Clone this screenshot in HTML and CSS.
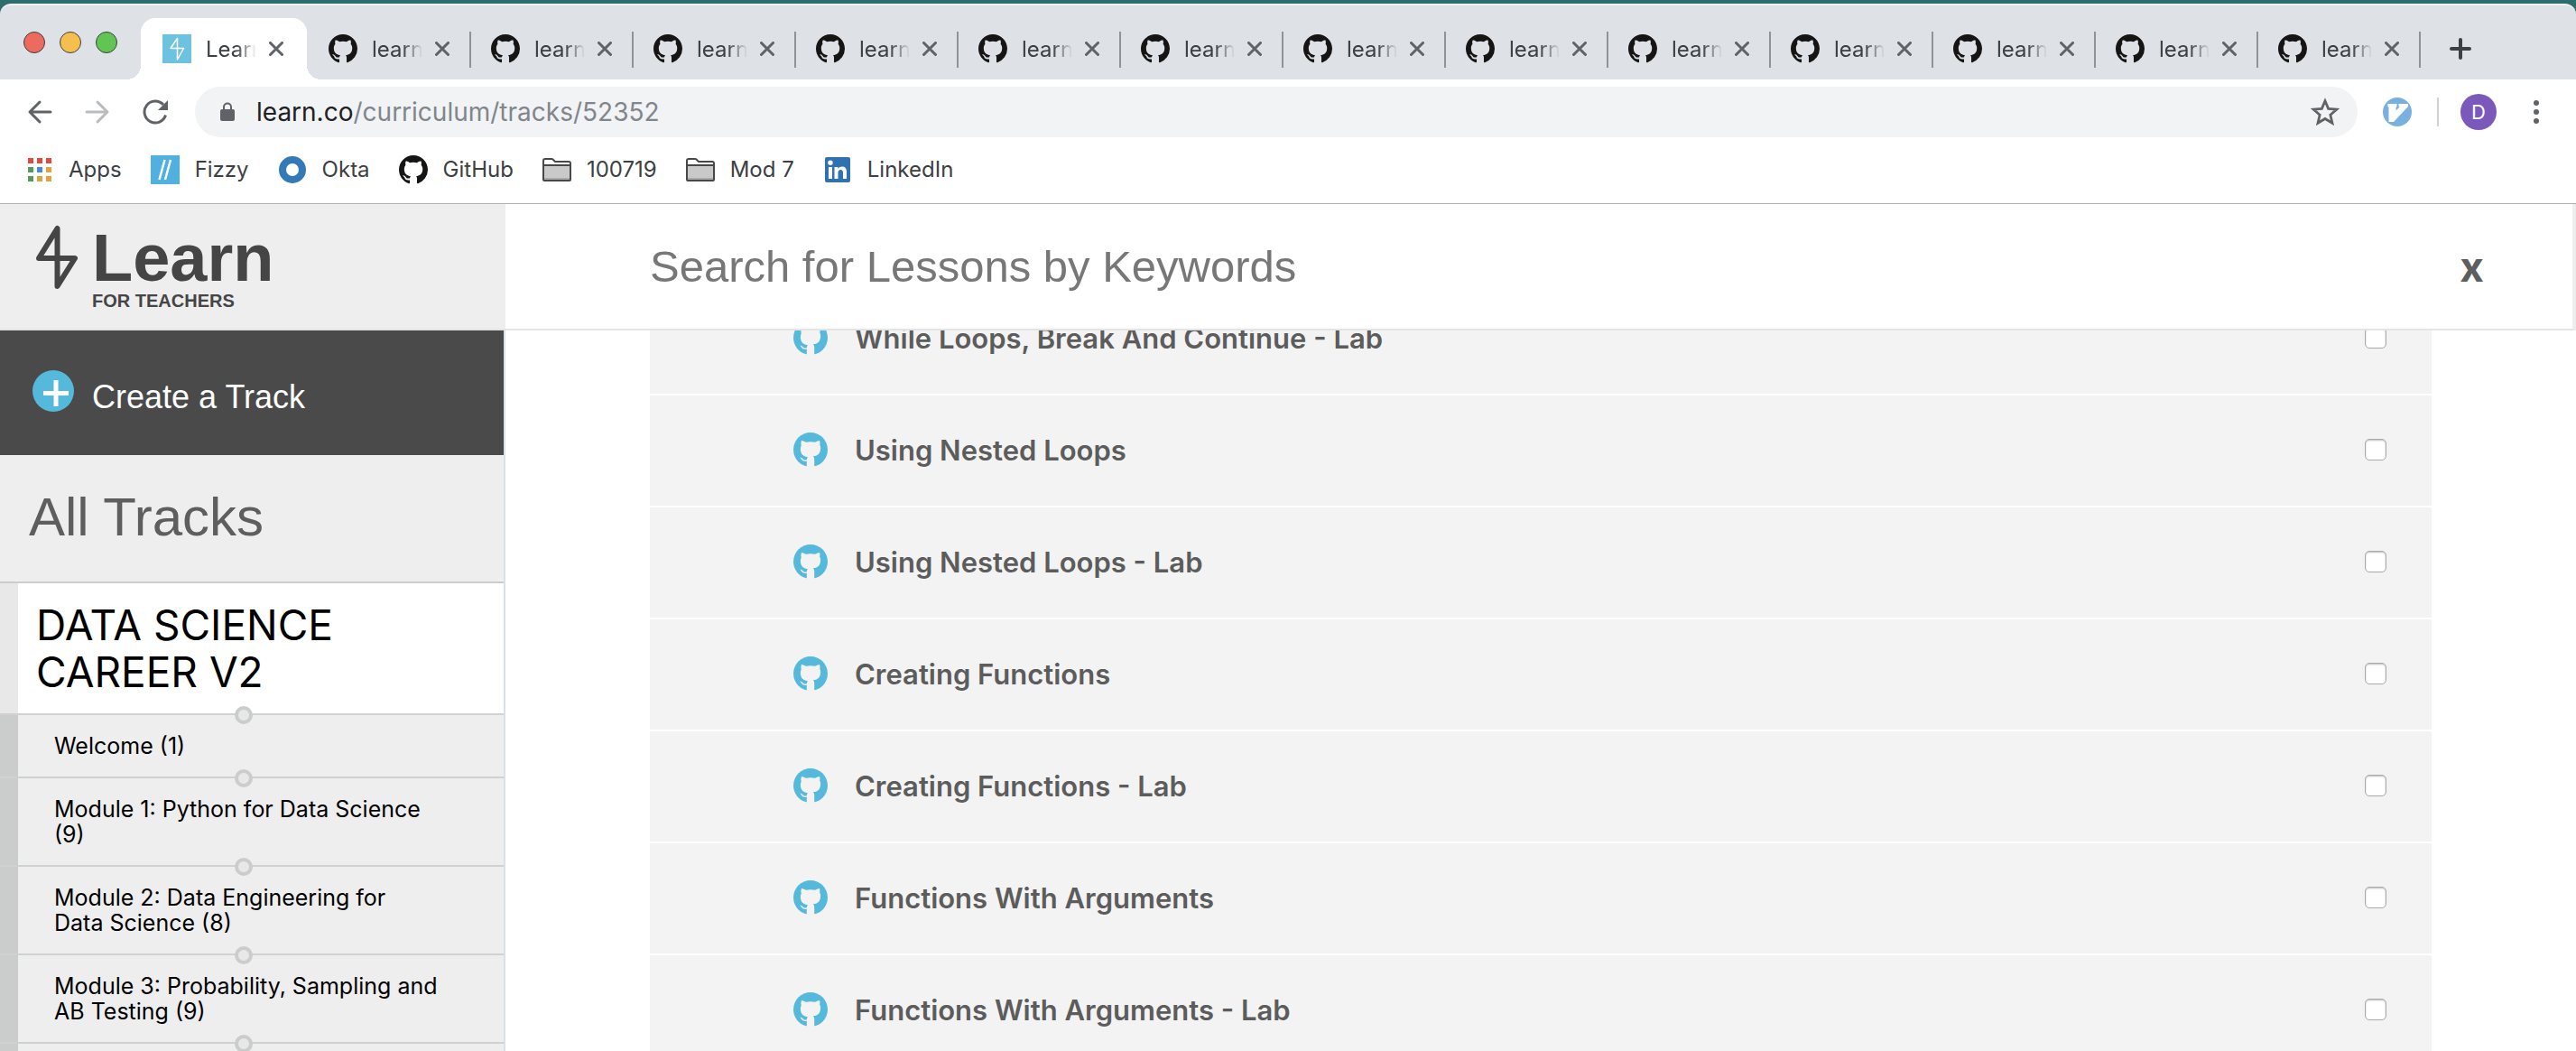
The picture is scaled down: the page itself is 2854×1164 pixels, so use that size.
FILE: index.html
```html
<!DOCTYPE html>
<html lang="en">
<head>
<meta charset="utf-8">
<title>Learn for Teachers</title>
<link rel="stylesheet" href="styles.css">
<script src="app.js" defer></script>
</head>
<body>
<svg class="sprite" aria-hidden="true">
  <symbol id="github" viewBox="0 0 16 16"><path fill="currentColor" d="M8 0C3.58 0 0 3.58 0 8c0 3.54 2.29 6.53 5.47 7.59.4.07.55-.17.55-.38 0-.19-.01-.82-.01-1.49-2.01.37-2.53-.49-2.69-.94-.09-.23-.48-.94-.82-1.13-.28-.15-.68-.52-.01-.53.63-.01 1.08.58 1.23.82.72 1.21 1.87.87 2.33.66.07-.52.28-.87.51-1.07-1.78-.2-3.64-.89-3.64-3.95 0-.87.31-1.59.82-2.15-.08-.2-.36-1.02.08-2.12 0 0 .67-.21 2.2.82.64-.18 1.32-.27 2-.27s1.36.09 2 .27c1.53-1.04 2.2-.82 2.2-.82.44 1.1.16 1.92.08 2.12.51.56.82 1.27.82 2.15 0 3.07-1.87 3.75-3.65 3.95.29.25.54.73.54 1.48 0 1.07-.01 1.93-.01 2.2 0 .21.15.46.55.38A8.01 8.01 0 0 0 16 8c0-4.42-3.58-8-8-8z"/></symbol>
  <symbol id="octo" viewBox="0 0 38 38"><circle cx="19" cy="19" r="19" fill="#55b9db"/><path fill="#f3f3f3" d="M9 9q.5-.6 5 1.800 5-1 10 0Q28.500 8.400 29 9q1 2.500.2 4.600Q30.500 15.500 30 19q-.8 7-8 7.300 1.200 1.300 1.200 3.200V38h-8.400v-6.200q-4.500.9-6-2.300-.5-1-1.600-1.700 2.300-.4 3.500 1.700 1.300 1.500 4.100.7.200-2.200 1.200-2.900-7.200-.6-8-7.300-.5-3.500.8-5.400Q8 11.500 9 9z"/></symbol>
  <symbol id="close" viewBox="0 0 16 16"><path d="M1.500 1.500l13 13M14.500 1.500l-13 13" stroke="#5f6368" stroke-width="3" stroke-linecap="round"/></symbol>
  <symbol id="folder" viewBox="0 0 32 26"><path d="M1 24V3q0-2 2-2h7q1 0 2 1l2 2h15q2 0 2 2v18q0 1-1 1H2q-1 0-1-1z" fill="#fff" stroke="#484848" stroke-width="2"/><path d="M2 9h28v15H2z" fill="#c9c9c9"/><path d="M2 8h28" stroke="#484848" stroke-width="2"/><path d="M2 23h28" stroke="#aaa" stroke-width="2"/></symbol>
</svg>

<header class="browser">
  <div class="tabstrip">
    <div class="lights"><i class="red"></i><i class="yellow"></i><i class="green"></i></div>
    <div class="tab active">
      <svg class="fav" viewBox="0 0 32 32"><path fill="#6dc3df" d="M0 0h32v32H0z"/><path d="M16.500 4.500v23.500l7-12.500H9z" fill="none" stroke="#fff" stroke-width="1.500" stroke-linejoin="round"/></svg>
      <span class="tab-name">Learn</span>
      <button class="close" aria-label="Close tab"><svg><use href="#close"/></svg></button>
    </div>
    <div class="tabs" id="tabs"></div>
    <button class="new-tab" aria-label="New tab"><svg viewBox="0 0 24 24"><path d="M12 2v20M2 12h20" stroke="#3c4043" stroke-width="4" stroke-linecap="round"/></svg></button>
  </div>

  <div class="toolbar">
    <div class="nav">
      <button aria-label="Back"><svg viewBox="0 0 28 28"><path d="M26 14H3M14 3L3 14l11 11" fill="none" stroke="#5f6368" stroke-width="3" stroke-linecap="round" stroke-linejoin="round"/></svg></button>
      <button aria-label="Forward"><svg viewBox="0 0 28 28"><path d="M2 14h23M14 3l11 11-11 11" fill="none" stroke="#babcbe" stroke-width="3" stroke-linecap="round" stroke-linejoin="round"/></svg></button>
      <button aria-label="Reload"><svg viewBox="0 0 28 28"><path d="M25.500 17.500A12 12 0 1 1 23 6" fill="none" stroke="#5f6368" stroke-width="3"/><path d="M28 1v11H17z" fill="#5f6368"/></svg></button>
    </div>
    <div class="omnibox">
      <svg class="lock" viewBox="0 0 18 22"><rect x="1" y="8" width="16" height="13" rx="2" fill="#5f6368"/><path d="M5 9V5.500a4 4 0 0 1 8 0V9" fill="none" stroke="#5f6368" stroke-width="2"/></svg>
      <span class="url"><b>learn.co</b>/curriculum/tracks/52352</span>
      <svg class="star" viewBox="0 0 30 30"><path d="M15 3.500l3.400 8.100 8.700.7-6.600 5.700 2 8.500-7.500-4.500-7.500 4.500 2-8.500-6.600-5.700 8.700-.7z" fill="none" stroke="#5f6368" stroke-width="2.600"/></svg>
    </div>
    <svg class="vim" viewBox="0 0 32 32"><circle cx="16" cy="16" r="16" fill="#78b1df"/><path d="M5.500 7h10v3l-1 1v3.500l4-4-1-1V7h10.500v3L12 27H6.500V11l-1-1z" fill="#fff"/></svg>
    <span class="bar"></span>
    <button class="avatar">D</button>
    <button class="more" aria-label="Menu"><svg viewBox="0 0 8 28"><circle cx="4" cy="4" r="3" fill="#5f6368"/><circle cx="4" cy="14" r="3" fill="#5f6368"/><circle cx="4" cy="24" r="3" fill="#5f6368"/></svg></button>
  </div>

  <nav class="bookmarks">
    <a href="#"><svg class="apps" viewBox="0 0 26 26"><path fill="#e3493b" d="M0 0h6v6H0zM10 0h6v6h-6zM20 0h6v6h-6z"/><path fill="#549a5c" d="M0 10h6v6H0zM0 20h6v6H0z"/><path fill="#4685f3" d="M10 10h6v6h-6z"/><path fill="#e2a33c" d="M20 10h6v6h-6zM10 20h6v6h-6zM20 20h6v6h-6z"/></svg>Apps</a>
    <a href="#"><svg viewBox="0 0 32 32"><path fill="#50b0e0" d="M0 0h32v32H0z"/><path d="M15.500 5L9.500 27M22 5l-6 22" stroke="#fff" stroke-width="2.500"/></svg>Fizzy</a>
    <a href="#"><svg viewBox="0 0 32 32"><circle cx="16" cy="16" r="11" fill="none" stroke="#337ab7" stroke-width="8"/></svg>Okta</a>
    <a href="#"><svg class="gh"><use href="#github"/></svg>GitHub</a>
    <a href="#"><svg class="folder"><use href="#folder"/></svg>100719</a>
    <a href="#"><svg class="folder"><use href="#folder"/></svg>Mod 7</a>
    <a href="#"><svg viewBox="0 0 32 32"><rect x="2" y="2" width="28" height="28" rx="2" fill="#2f72af"/><path fill="#fff" d="M6 13h4v13H6zM12.500 13h4v2q1.300-2.400 4.500-2.400 5 0 5 5.900V26h-4v-6.500q0-3.500-2.600-3.500-2.900 0-2.900 3.500V26h-4z"/><circle cx="8" cy="8.200" r="2.700" fill="#fff"/></svg>LinkedIn</a>
  </nav>
</header>

<div class="page">
  <aside class="sidebar">
    <a class="logo" href="#">
      <svg viewBox="0 0 46 74"><path d="M23.500 5v64L43 38H3z" fill="none" stroke="#454545" stroke-width="6" stroke-linejoin="round"/></svg>
      <span class="brand"><span class="name">Learn</span><span class="sub">FOR TEACHERS</span></span>
    </a>
    <button class="create"><svg viewBox="0 0 46 46"><circle cx="23" cy="23" r="23" fill="#55b9db"/><path d="M12 25.500h28M26 11v29" stroke="#fff" stroke-width="5"/></svg><span>Create a Track</span></button>
    <h1>All Tracks</h1>
    <section class="track">
      <h2>DATA SCIENCE<br>CAREER V2</h2>
      <ul>
        <li><a href="#">Welcome (1)</a></li>
        <li><a href="#">Module 1: Python for Data&nbsp;Science (9)</a></li>
        <li><a href="#">Module 2: Data Engineering for Data&nbsp;Science (8)</a></li>
        <li><a href="#">Module 3: Probability, Sampling and AB Testing (9)</a></li>
        <li></li>
      </ul>
    </section>
  </aside>

  <main class="main">
    <div class="search">
      <input type="text" placeholder="Search for Lessons by Keywords" aria-label="Search for Lessons by Keywords">
      <button class="clear">x</button>
    </div>
    <div class="viewport">
      <ul class="lessons">
        <li><svg><use href="#octo"/></svg><label for="l1">While Loops, Break And Continue - Lab</label><input type="checkbox" id="l1"></li>
        <li><svg><use href="#octo"/></svg><label for="l2">Using Nested Loops</label><input type="checkbox" id="l2"></li>
        <li><svg><use href="#octo"/></svg><label for="l3">Using Nested Loops - Lab</label><input type="checkbox" id="l3"></li>
        <li><svg><use href="#octo"/></svg><label for="l4">Creating Functions</label><input type="checkbox" id="l4"></li>
        <li><svg><use href="#octo"/></svg><label for="l5">Creating Functions - Lab</label><input type="checkbox" id="l5"></li>
        <li><svg><use href="#octo"/></svg><label for="l6">Functions With Arguments</label><input type="checkbox" id="l6"></li>
        <li><svg><use href="#octo"/></svg><label for="l7">Functions With Arguments - Lab</label><input type="checkbox" id="l7"></li>
      </ul>
    </div>
  </main>
</div>
</body>
</html>
```
FILE: app.js
```js
// Background tabs all show the same repository page.
const tab = `<div class="tab">
  <svg class="fav"><use href="#github"/></svg>
  <span class="tab-name">learn</span>
  <button class="close" aria-label="Close tab"><svg><use href="#close"/></svg></button>
</div>`;
document.getElementById('tabs').innerHTML = tab.repeat(13);
```
FILE: styles.css
```css
*, *::before, *::after { box-sizing: border-box; }
body {
  margin: 0;
  height: 100vh;
  display: flex;
  flex-direction: column;
  overflow: hidden;
  background: #fff;
  font-family: Inter, "Liberation Sans", sans-serif;
  color: #3c4043;
}
button { border: 0; padding: 0; background: none; font: inherit; color: inherit; }
a { color: inherit; text-decoration: none; }
ul { list-style: none; margin: 0; padding: 0; }
svg { display: block; flex: none; }
.sprite { position: absolute; width: 0; height: 0; }

/* Browser chrome */
.browser { flex: none; background: #2d6d6b; border-bottom: 1px solid #b0b0b0; padding-top: 4px; }
.tabstrip {
  height: 84px;
  display: flex;
  align-items: flex-end;
  background: #dee1e6;
  border-top: 2px solid #eef0f2;
  border-radius: 12px 12px 0 0;
}
.lights { width: 156px; height: 68px; padding: 15px 0 0 26px; display: flex; gap: 16px; }
.lights i { width: 24px; height: 24px; border-radius: 50%; border: 1px solid; }
.red { background: #ed6a5f; border-color: #d5574c; }
.yellow { background: #f5bf4f; border-color: #d8a33f; }
.green { background: #61c554; border-color: #50a945; }
.tab {
  width: 180px;
  height: 68px;
  display: flex;
  align-items: center;
  padding-left: 22px;
  position: relative;
  font-size: 24px;
}
.tabs { display: flex; margin-left: 2px; }
.tabs .tab::after { content: ""; position: absolute; right: 0; top: 15px; width: 2px; height: 40px; background: #8f9296; }
.tab.active { width: 184px; padding-left: 24px; background: #fff; border-radius: 16px 16px 0 0; }
.tab.active::before, .tab.active::after { content: ""; position: absolute; bottom: 0; width: 16px; height: 16px; }
.tab.active::before { left: -16px; background: radial-gradient(circle at 0 0, transparent 16px, #fff 16px); }
.tab.active::after { right: -16px; background: radial-gradient(circle at 100% 0, transparent 16px, #fff 16px); }
.fav { width: 32px; height: 32px; color: #161514; }
.tab-name {
  width: 56px;
  margin-left: 16px;
  overflow: hidden;
  -webkit-mask-image: linear-gradient(90deg, #000 34px, transparent);
  mask-image: linear-gradient(90deg, #000 34px, transparent);
}
.close { margin-left: 14px; }
.close svg { width: 16px; height: 16px; }
.new-tab { height: 68px; margin-left: 32px; }
.new-tab svg { width: 24px; height: 24px; }

.toolbar { height: 72px; background: #fff; display: flex; align-items: center; padding: 0 40px 0 30px; }
.nav { display: flex; gap: 36px; margin-right: 30px; }
.nav svg { width: 28px; height: 28px; }
.omnibox {
  flex: 1;
  height: 56px;
  border-radius: 28px;
  background: #f1f3f4;
  display: flex;
  align-items: center;
  padding: 0 20px 0 27px;
}
.lock { width: 18px; height: 22px; }
.url { flex: 1; margin-left: 23px; font-size: 28px; color: #80868b; }
.url b { font-weight: 400; color: #202124; }
.star { width: 32px; height: 32px; }
.vim { width: 32px; height: 32px; margin-left: 28px; }
.bar { width: 2px; height: 32px; margin: 0 24px 0 28px; background: #d0d2d4; }
.avatar { width: 40px; height: 40px; border-radius: 50%; background: #7a59bb; color: #fff; font-size: 22px; }
.more { margin-left: 40px; }
.more svg { width: 8px; height: 28px; }

.bookmarks {
  height: 65px;
  padding: 0 31px 10px;
  background: #fff;
  display: flex;
  align-items: center;
  gap: 32px;
  font-size: 24px;
}
.bookmarks a { display: flex; align-items: center; gap: 17px; height: 56px; }
.bookmarks svg { width: 32px; height: 32px; }
.bookmarks .apps { width: 26px; height: 26px; margin-right: 2px; }
.bookmarks .gh { color: #161514; }
.bookmarks .folder { height: 26px; }

/* Page */
.page { flex: 1; min-height: 0; display: flex; overflow: hidden; }
.sidebar { width: 560px; flex: none; background: #eee; border-right: 2px solid #dbe0e4; color: #000; }
.logo {
  height: 140px;
  display: flex;
  padding: 22px 0 0 40px;
  gap: 16px;
  border-bottom: 2px solid #e4e4e4;
  margin-right: -2px;
  background: #eee;
  color: #454545;
  font-family: "Liberation Sans", Arial, sans-serif;
  font-weight: 700;
}
.logo svg { width: 46px; height: 74px; }
.brand { display: flex; flex-direction: column; }
.name { font-size: 74px; line-height: 75px; }
.sub { font-size: 20px; line-height: 20px; }
.create {
  width: 100%;
  height: 138px;
  background: #4a4a4a;
  color: #fff;
  font-family: "Liberation Sans", Arial, sans-serif;
  font-size: 36px;
  display: flex;
  align-items: center;
  padding-left: 36px;
  gap: 20px;
}
.create svg { width: 46px; height: 46px; margin-bottom: 4px; }
.create span { padding-top: 10px; }
h1 {
  margin: 0;
  height: 140px;
  padding-left: 32px;
  font: 400 60px/138px "Liberation Sans", Arial, sans-serif;
  color: #5e5e5e;
}
.track { border-top: 2px solid #ccc; }
h2 { margin: 0; padding: 20px; border-left: 20px solid #e8e8e8; background: #fff; font-size: 46px; line-height: 52px; font-weight: 400; }
.track li {
  position: relative;
  min-height: 70px;
  border-top: 2px solid #d0d1d1;
  background: linear-gradient(90deg, #cbcdcc 20px, #eee 20px);
  padding: 20px 66px 20px 60px;
  font-size: 25px;
  line-height: 28px;
}
.track li::before {
  content: "";
  position: absolute;
  left: 260px;
  top: -10px;
  width: 20px;
  height: 20px;
  border: 4px solid #cbcdcc;
  border-radius: 50%;
  background: #e8e8e8;
}
.main { flex: 1; min-width: 0; display: flex; flex-direction: column; }
.search {
  flex: none;
  height: 140px;
  display: flex;
  align-items: center;
  border-bottom: 2px solid #e4e4e4;
  border-right: 4px solid #eee;
  padding: 0 98px 0 160px;
}
.search input { flex: 1; border: 0; padding: 0; background: none; outline: 0; font: 49px/60px "Liberation Sans", Arial, sans-serif; color: #5e5e5e; }
.search input::placeholder { color: #777; opacity: 1; }
.clear { font-size: 46px; font-weight: 700; color: #5e5e5e; }
.viewport { flex: 1; min-height: 0; overflow: hidden; padding: 0 160px; }
.lessons { margin-top: -52px; }
.lessons li {
  height: 124px;
  display: flex;
  align-items: center;
  padding: 0 50px 2px 159px;
  border-bottom: 2px solid #fff;
  background: #f3f3f3;
  color: #5c5c5c;
  font-size: 31px;
  font-weight: 600;
}
.lessons svg { width: 38px; height: 38px; }
.lessons label { flex: 1; margin-left: 30px; }
.lessons input {
  appearance: none;
  width: 24px;
  height: 24px;
  margin: 0;
  border: 1px solid #aaa;
  border-radius: 5px;
  background: #fff;
  box-shadow: inset 0 1px 2px #bbb;
}
```
